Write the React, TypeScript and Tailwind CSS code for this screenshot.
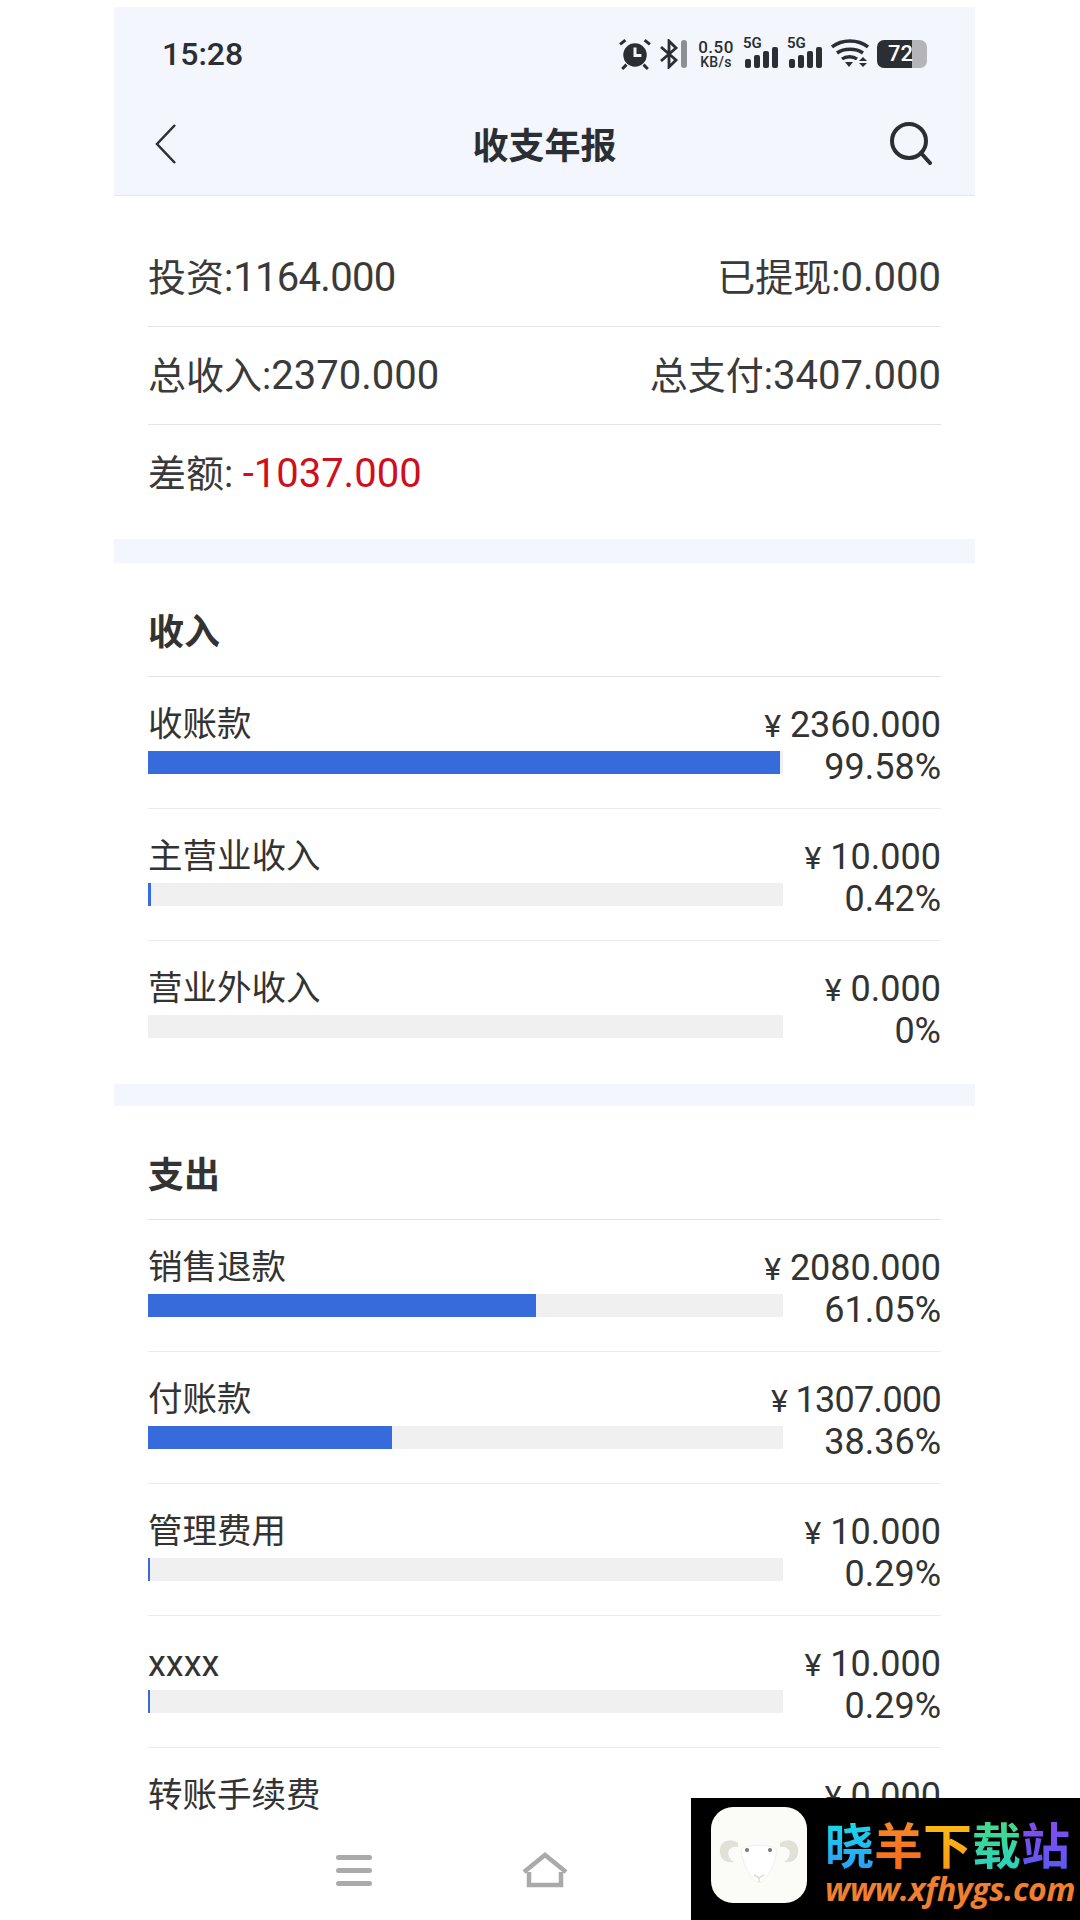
const FONT = "font-['Roboto','Noto_Sans_CJK_SC',sans-serif]";

type Item = { name: string; amount: string; pct: string; width: number };

const income: Item[] = [
  { name: "收账款", amount: "2360.000", pct: "99.58%", width: 99.58 },
  { name: "主营业收入", amount: "10.000", pct: "0.42%", width: 0.42 },
  { name: "营业外收入", amount: "0.000", pct: "0%", width: 0 },
];

const expense: Item[] = [
  { name: "销售退款", amount: "2080.000", pct: "61.05%", width: 61.05 },
  { name: "付账款", amount: "1307.000", pct: "38.36%", width: 38.36 },
  { name: "管理费用", amount: "10.000", pct: "0.29%", width: 0.29 },
  { name: "xxxx", amount: "10.000", pct: "0.29%", width: 0.29 },
  { name: "转账手续费", amount: "0.000", pct: "0%", width: 0 },
];

const Signal = () => (
  <div className="relative w-[36px] h-[30px]">
    <span className="absolute left-0 top-[-4px] text-[15px] leading-[16px] font-semibold">5G</span>
    <svg className="absolute left-0 top-0" width="36" height="30" viewBox="0 0 36 30" fill="#2b2e33">
      <rect x="2" y="20" width="6" height="9" rx="2" />
      <rect x="11" y="16" width="6" height="13" rx="2" />
      <rect x="20" y="12" width="6" height="17" rx="2" />
      <rect x="29" y="8" width="6" height="21" rx="2" />
    </svg>
  </div>
);

const StatusBar = () => (
  <div className="flex items-center justify-between h-[92px] pl-[48px] pr-[48px] pt-[2px] text-[#2b2e33]">
    <span className="text-[32px] font-medium leading-none">15:28</span>
    <div className="flex items-center gap-[8px]">
      <svg width="32" height="32" viewBox="0 0 30 30" fill="none" stroke="#2b2e33">
        <circle cx="15" cy="16" r="11" fill="#2b2e33" stroke="none" />
        <path d="M15 9v7.500h6" stroke="#f3f6fc" strokeWidth="2.800" />
        <path d="M1 6l5-4M29 6l-5-4M7 25l-4 4M23 25l4 4" strokeWidth="2.800" />
      </svg>
      <svg width="30" height="30" viewBox="0 0 30 30" fill="none">
        <path d="M2 8l15 13-7 7V2l7 7L2 22" stroke="#2b2e33" strokeWidth="2.800" />
        <rect x="22" y="1" width="6" height="28" rx="3" fill="#8c8f94" />
      </svg>
      <div className="flex flex-col items-center w-[38px] font-medium leading-none">
        <span className="text-[17px] leading-[16px] tracking-[0.5px]">0.50</span>
        <span className="text-[14px] leading-[15px] tracking-[0.3px]">KB/s</span>
      </div>
      <Signal />
      <Signal />
      <svg width="38" height="30" viewBox="0 0 38 30" fill="none" stroke="#2b2e33" strokeWidth="3.400">
        <path d="M1 8c10-8 26-8 36 0M6 14c7-5 19-5 26 0M11 20c4-3 11-3 15 0" />
        <path d="M14 23h8l-4 5z" fill="#2b2e33" stroke="none" />
        <path d="M28 22l4-4 4 4zM28 24l4 4 4-4z" fill="#2b2e33" stroke="none" />
      </svg>
      <div className="relative flex items-center w-[50px] h-[28px]">
        <div className="w-[35px] h-[28px] rounded-l-[7px] bg-[#2b2e33]" />
        <div className="w-[15px] h-[28px] rounded-r-[7px] bg-[#b3b5b9]" />
        <span className="absolute left-[11px] top-[2px] text-[22px] leading-[24px] font-medium text-white">72</span>
      </div>
    </div>
  </div>
);

const NavBar = () => (
  <div className="flex items-center justify-between h-[97px] pl-[40px] pr-[42px] pb-[8px] border-b border-[#e6e8ec]">
    <svg width="24" height="40" viewBox="0 0 24 40" fill="none" stroke="#2b2e33" strokeWidth="2.500" className="mt-[2px]">
      <path d="M21 1L3 20l18 19" />
    </svg>
    <h1 className="pl-[22px] mt-[8px] text-[36px] font-bold text-[#2b2e33] leading-none">收支年报</h1>
    <svg width="44" height="44" viewBox="0 0 44 44" fill="none" stroke="#2b2e33" strokeWidth="4">
      <circle cx="20" cy="20" r="17" />
      <path d="M32 32l9 10" strokeLinecap="round" />
    </svg>
  </div>
);

const Figure = ({ label, value, tight }: { label: string; value: string; tight?: boolean }) => (
  <span className="whitespace-nowrap">
    {label}
    <span className={tight ? "text-[40px] tracking-[-0.7px]" : "text-[40px]"}>{value}</span>
  </span>
);

const SummaryRow = ({ children, line = true }: { children: React.ReactNode; line?: boolean }) => (
  <div className={`flex items-center justify-between h-[98px] text-[38px] text-[#3a3a3a] ${line ? "border-b border-[#e4e4e4]" : ""}`}>
    {children}
  </div>
);

const ReportRow = ({ item, last }: { item: Item; last: boolean }) => (
  <div className={`h-[132px] pt-[25px] text-[#333] ${last ? "" : "border-b border-[#ebebeb]"}`}>
    <div className="flex items-center justify-between h-[46px] whitespace-nowrap">
      <span className={item.name === "xxxx" ? "text-[36px]" : "text-[34.500px]"}>{item.name}</span>
      <span className={item.amount.startsWith("13") ? "text-[36px] tracking-[-0.7px]" : "text-[36px]"}>
        <span className="text-[32px]">¥</span> {item.amount}
      </span>
    </div>
    <div className="flex justify-between h-[41px]">
      <div className="w-[635px] h-[23px] mt-[3px] bg-[#f0f0f0]">
        {item.width > 0 && <div className="h-full min-w-[2px] bg-[#376bdb]" style={{ width: `${item.width}%` }} />}
      </div>
      <span className="text-[36px] leading-[41px] -mt-[1px] whitespace-nowrap">{item.pct}</span>
    </div>
  </div>
);

const Section = ({ title, items }: { title: string; items: Item[] }) => (
  <section className="mx-[34px]">
    <h2 className="flex items-center h-[114px] pt-[26px] text-[36px] font-bold text-[#333] border-b border-[#e4e4e4]">
      {title}
    </h2>
    {items.map((item, i) => (
      <ReportRow key={item.name} item={item} last={i === items.length - 1} />
    ))}
  </section>
);

const Watermark = () => (
  <div className="absolute right-0 bottom-0 flex items-start w-[389px] h-[122px] pl-[20px] pt-[9px] bg-black">
    <svg width="96" height="96" viewBox="0 0 96 96" className="shrink-0">
      <rect width="96" height="96" rx="22" fill="#fbfbf8" />
      <path d="M27 36c-10-7-22 0-17 14 3 5 9 6 13 5-5-3-7-8-5-12 2-3 6-4 9-3zM69 36c10-7 22 0 17 14-3 5-9 6-13 5 5-3 7-8 5-12-2-3-6-4-9-3z" fill="#e2e1d8" />
      <path d="M30 42c8-5 28-5 36 0-1 14-9 30-18 34-9-4-17-20-18-34z" fill="#ffffff" stroke="#f1f0ea" />
      <circle cx="36" cy="43" r="2" fill="#777" />
      <circle cx="59" cy="43" r="2" fill="#777" />
      <path d="M43 68l5 3 5-3M48 71v4" stroke="#dcdbd0" strokeWidth="1.500" fill="none" />
    </svg>
    <div className="ml-[18px] mt-[8px] flex flex-col">
      <div className="flex text-[49px] leading-[56px] font-bold font-['Noto_Sans_CJK_SC',sans-serif]">
        <span className="bg-linear-to-b from-[#1fe0e6] to-[#2a9cf8] bg-clip-text text-transparent">晓</span>
        <span className="bg-linear-to-b from-[#f98a2a] to-[#f7681c] bg-clip-text text-transparent">羊</span>
        <span className="bg-linear-to-b from-[#fbc01a] to-[#f99a12] bg-clip-text text-transparent">下</span>
        <span className="bg-linear-to-b from-[#45dc7c] to-[#2ad0c0] bg-clip-text text-transparent">载</span>
        <span className="bg-linear-to-b from-[#8a48ee] to-[#5a58f0] bg-clip-text text-transparent">站</span>
      </div>
      <div className="text-[32px] leading-[36px] font-bold italic text-[#f08030] font-['Open_Sans',sans-serif] whitespace-nowrap tracking-[-0.3px]">
        www.xfhygs.com
      </div>
    </div>
  </div>
);

const BottomBar = () => (
  <div className="absolute left-[114px] bottom-0 flex items-start w-[861px] h-[106px] pt-[38px] bg-white">
    <div className="ml-[222px] flex flex-col gap-[8px] mt-[3px] w-[36px]">
      <div className="h-[5px] rounded-full bg-[#aaaaaa]" />
      <div className="h-[5px] rounded-full bg-[#aaaaaa]" />
      <div className="h-[5px] rounded-full bg-[#aaaaaa]" />
    </div>
    <svg className="ml-[150px]" width="46" height="36" viewBox="0 0 46 36" fill="none" stroke="#aaaaaa" strokeWidth="4.500">
      <path d="M2 20L23 3l21 17" />
      <path d="M7 20v13h32V20" />
    </svg>
  </div>
);

export default function App() {
  return (
    <div className={`relative w-[1080px] h-[1920px] overflow-hidden bg-white ${FONT}`}>
      <div className="ml-[114px] w-[861px] pt-[7px]">
        <header className="bg-[#f3f6fc]">
          <StatusBar />
          <NavBar />
        </header>
        <div className="mx-[34px] pt-[33px]">
          <SummaryRow>
            <Figure label="投资:" value="1164.000" tight />
            <Figure label="已提现:" value="0.000" />
          </SummaryRow>
          <SummaryRow>
            <Figure label="总收入:" value="2370.000" />
            <Figure label="总支付:" value="3407.000" />
          </SummaryRow>
          <SummaryRow line={false}>
            <span className="whitespace-nowrap">
              差额:&nbsp;<span className="text-[40px] text-[#cf0f1c]">-1037.000</span>
            </span>
          </SummaryRow>
        </div>
        <div className="h-[24px] mt-[16px] bg-[#f3f6fc]" />
        <Section title="收入" items={income} />
        <div className="h-[22px] mt-[11px] bg-[#f3f6fc]" />
        <Section title="支出" items={expense} />
      </div>
      <BottomBar />
      <Watermark />
    </div>
  );
}
